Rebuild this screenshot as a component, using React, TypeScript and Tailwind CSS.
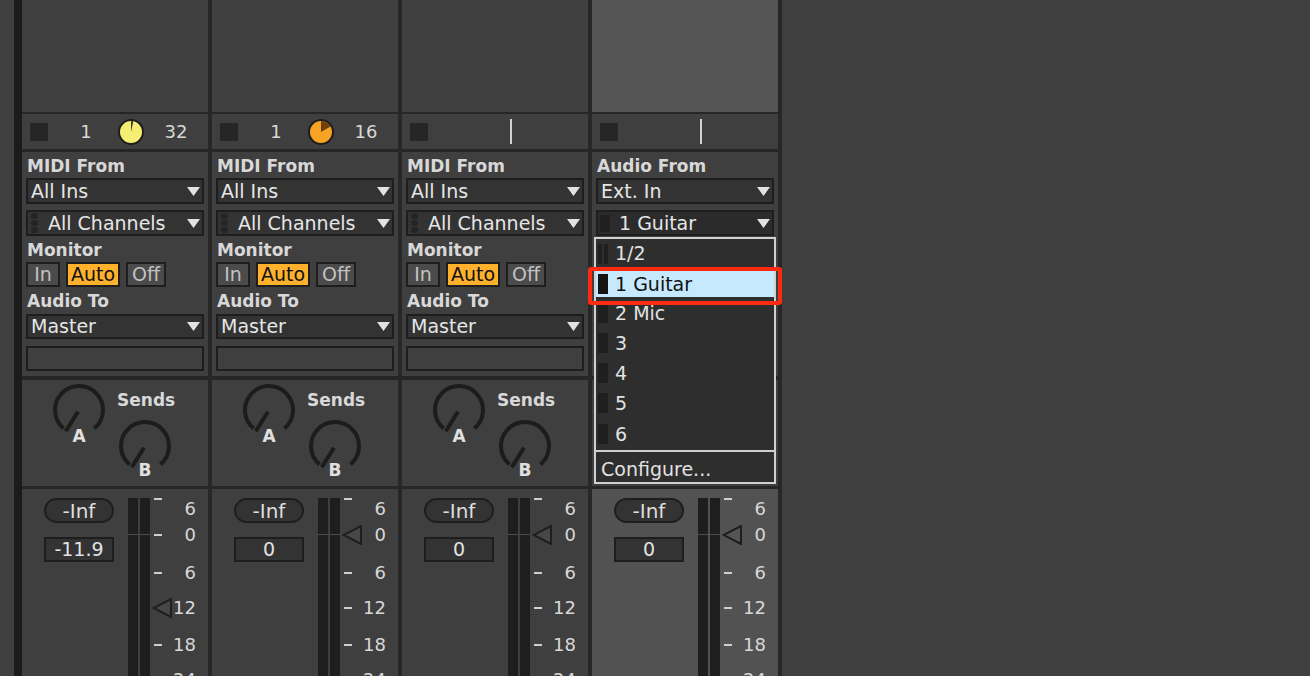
import React from 'react';

type Channel = {
  clip: 'yellow' | 'orange' | 'line';
  from: string;
  volume: string;
  fader: number;
  selected?: boolean;
};

const CHANNELS: Channel[] = [
  { clip: 'yellow', from: 'MIDI', volume: '-11.9', fader: 119 },
  { clip: 'orange', from: 'MIDI', volume: '0', fader: 46 },
  { clip: 'line', from: 'MIDI', volume: '0', fader: 46 },
  { clip: 'line', from: 'Audio', volume: '0', fader: 46, selected: true },
];

const SCALE = [
  { tick: 10, label: '6', y: 20 },
  { tick: 46, label: '0', y: 46 },
  { tick: 84, label: '6', y: 84 },
  { tick: 119, label: '12', y: 119 },
  { tick: 156, label: '18', y: 156 },
  { tick: 191, label: '24', y: 191 },
];

const INPUTS = [
  { label: '1/2', h: 'h-[29px]', stereo: true },
  { label: '1 Guitar', h: 'h-[30px]', active: true },
  { label: '2 Mic', h: 'h-[30px]' },
  { label: '3', h: 'h-[30px]' },
  { label: '4', h: 'h-[30px]' },
  { label: '5', h: 'h-[30px]' },
  { label: '6', h: 'h-[32px]' },
];

const Caret = () => (
  <svg width="13" height="9" viewBox="0 0 13 9" className="shrink-0">
    <path d="M0 0H13L6.5 9Z" fill="#e2e2e2" />
  </svg>
);

const Dots = () => (
  <div className="ml-[3px] flex w-[7px] shrink-0 flex-col gap-[1px]">
    <div className="h-[6px] rounded-full bg-[#242424]" />
    <div className="h-[6px] rounded-full bg-[#242424]" />
    <div className="h-[6px] rounded-full bg-[#242424]" />
  </div>
);

const Dropdown: React.FC<{ label: string; lead?: 'dots' | 'bar'; h?: string; dark?: boolean }> = ({ label, lead, h = 'h-[26px]', dark }) => (
  <div className={`flex ${h} items-center border-2 border-[#1e1e1e] pr-[2px] ${dark ? 'bg-[#2b2b2b]' : 'bg-[#333333]'} ${lead ? '' : 'pl-[3px]'}`}>
    {lead === 'dots' && <Dots />}
    {lead === 'bar' && <div className="ml-[2px] h-[17px] w-[10px] shrink-0 bg-[#202020]" />}
    <span className={`flex-1 text-[19px] leading-none text-[#e6e6e6] ${lead === 'dots' ? 'ml-[10px]' : lead === 'bar' ? 'ml-[9px]' : ''}`}>{label}</span>
    <Caret />
  </div>
);

const Label: React.FC<{ text: string; h?: string }> = ({ text, h = 'h-[26px]' }) => (
  <div className={`flex ${h} items-center pl-[1px] pt-[2px] text-[17px] font-bold leading-none text-[#d8d8d8]`}>{text}</div>
);

const MonitorButton: React.FC<{ text: string; w: string; on?: boolean }> = ({ text, w, on }) => (
  <div className={`flex h-full ${w} items-center justify-center border-2 border-[#1e1e1e] text-[19px] leading-none ${on ? 'bg-[#ffb12c] text-[#111111]' : 'bg-[#4b4b4b] text-[#c2c2c2]'}`}>
    {text}
  </div>
);

const ClipKnob: React.FC<{ kind: 'yellow' | 'orange' }> = ({ kind }) => {
  const yellow = kind === 'yellow';
  const deg = yellow ? 12 : 60;
  const a = (deg * Math.PI) / 180;
  const x = 13 + 11 * Math.sin(a);
  const y = 13 - 11 * Math.cos(a);
  return (
    <svg width="26" height="26" viewBox="0 0 26 26">
      <circle cx="13" cy="13" r="12" fill={yellow ? '#f4ee72' : '#f7a424'} stroke="#1e1e1e" strokeWidth="2" />
      <path d={`M13 13L13 2A11 11 0 0 1 ${x} ${y}Z`} fill={yellow ? '#3b3a22' : '#6f400c'} />
    </svg>
  );
};

const SendKnob = () => {
  const r = 24;
  const s = Math.sin((40 * Math.PI) / 180) * r;
  const c = Math.cos((40 * Math.PI) / 180) * r;
  const p = (32 * Math.PI) / 180;
  return (
    <svg width="56" height="56" viewBox="0 0 56 56" className="shrink-0">
      <path d={`M${28 - s} ${28 + c}A${r} ${r} 0 1 1 ${28 + s} ${28 + c}`} fill="none" stroke="#1c1c1c" strokeWidth="4" />
      <line x1={28 - 2 * Math.sin(p)} y1={28 + 2 * Math.cos(p)} x2={28 - 25 * Math.sin(p)} y2={28 + 25 * Math.cos(p)} stroke="#1c1c1c" strokeWidth="4" />
    </svg>
  );
};

const InputMenu = () => (
  <>
    <div className="absolute left-[2px] top-[237px] z-10 flex h-[247px] w-[182px] flex-col border-2 border-[#d0d0d0] bg-[#2e2e2e]">
      {INPUTS.map((item) => (
        <div key={item.label} className={`${item.h} flex items-center`}>
          <div className={`flex h-[26px] flex-1 items-center ${item.active ? 'mt-[2px] bg-[#c6e9fd]' : ''}`}>
            {item.stereo ? (
              <div className="ml-[2px] flex h-[20px] w-[10px] gap-[2px]">
                <div className="w-[4px] bg-[#1f1f1f]" />
                <div className="w-[4px] bg-[#1f1f1f]" />
              </div>
            ) : (
              <div className={`ml-[2px] h-[20px] w-[10px] ${item.active ? 'bg-[#141414]' : 'bg-[#1f1f1f]'}`} />
            )}
            <span className={`ml-[7px] text-[19px] leading-none ${item.active ? 'text-[#111111]' : 'text-[#e2e2e2]'}`}>{item.label}</span>
          </div>
        </div>
      ))}
      <div className="h-[2px] bg-[#d0d0d0]" />
      <div className="flex h-[30px] items-center pl-[5px] pt-[4px] text-[19px] leading-none text-[#e2e2e2]">Configure...</div>
    </div>
    <div className="absolute left-[-4px] top-[267px] z-20 h-[38px] w-[194px] rounded-[3px] border-4 border-[#ff2a12]" />
  </>
);

const ChannelStrip: React.FC<{ ch: Channel }> = ({ ch }) => {
  const mixBg = ch.selected ? 'bg-[#525252]' : '';
  return (
    <div className="relative flex w-[186px] shrink-0 flex-col">
      <div className={`h-[112px] ${ch.selected ? 'bg-[#555555]' : ''}`} />
      <div className="h-[2px] bg-[#262626]" />

      <div className="flex h-[35px] items-center pl-[8px]">
        <div className="h-[18px] w-[18px] bg-[#262626]" />
        {ch.clip === 'line' ? (
          <div className="ml-[82px] h-[25px] w-[2px] bg-[#d2d2d2]" />
        ) : (
          <>
            <div className="ml-[14px] w-[48px] text-center text-[18px] leading-none text-[#d8d8d8]">1</div>
            <div className="ml-[8px] flex h-[26px] w-[26px]">
              <ClipKnob kind={ch.clip} />
            </div>
            <div className="ml-[8px] w-[48px] text-center text-[18px] leading-none text-[#d8d8d8]">{ch.clip === 'yellow' ? '32' : '16'}</div>
          </>
        )}
      </div>
      <div className="h-[3px] bg-[#262626]" />

      <div className="flex h-[224px] flex-col px-[4px]">
        {ch.from === 'MIDI' ? (
          <>
            <Label text="MIDI From" />
            <Dropdown label="All Ins" />
            <div className="mt-[6px]">
              <Dropdown label="All Channels" lead="dots" />
            </div>
            <Label text="Monitor" />
            <div className="flex h-[25px] gap-[6px]">
              <MonitorButton text="In" w="w-[34px]" />
              <MonitorButton text="Auto" w="w-[54px]" on />
              <MonitorButton text="Off" w="w-[40px]" />
            </div>
            <Label text="Audio To" h="h-[27px]" />
            <Dropdown label="Master" h="h-[25px]" />
            <div className="mt-[7px] h-[25px] border-2 border-[#1e1e1e]" />
          </>
        ) : (
          <>
            <Label text="Audio From" />
            <Dropdown label="Ext. In" />
            <div className="mt-[6px]">
              <Dropdown label="1 Guitar" lead="bar" dark />
            </div>
          </>
        )}
      </div>
      <div className="h-[4px] bg-[#262626]" />

      <div className="flex h-[106px] pl-[29px] pt-[2px]">
        {!ch.selected && (
          <>
            <div className="flex w-[56px] flex-col items-center">
              <SendKnob />
              <span className="-mt-[10px] text-[17px] font-bold leading-[17px] text-[#e0e0e0]">A</span>
            </div>
            <div className="ml-[10px] flex flex-col">
              <span className="mt-[8px] h-[20px] text-[17px] font-bold leading-[20px] text-[#d8d8d8]">Sends</span>
              <div className="mt-[8px] flex w-[56px] flex-col items-center">
                <SendKnob />
                <span className="-mt-[12px] text-[17px] font-bold leading-[17px] text-[#e0e0e0]">B</span>
              </div>
            </div>
          </>
        )}
      </div>
      <div className="h-[3px] bg-[#262626]" />

      <div className={`flex flex-1 ${mixBg}`}>
        <div className="flex w-[92px] shrink-0 flex-col pl-[22px] pt-[9px]">
          <div className="flex h-[25px] w-[70px] items-center justify-center rounded-full border-2 border-[#1e1e1e] bg-[#333333] text-[20px] leading-none text-[#dedede]">-Inf</div>
          <div className="mt-[14px] flex h-[25px] w-[70px] items-center justify-center border-2 border-[#1e1e1e] bg-[#333333] text-[19px] leading-none text-[#e2e2e2]">{ch.volume}</div>
        </div>
        <div className="ml-[14px] flex gap-[2px] pt-[9px]">
          <div className="relative w-[10px] bg-[#1e1e1e]">
            <div className="absolute left-0 top-[36px] h-px w-full bg-[#4c4c4c]" />
          </div>
          <div className="relative w-[10px] bg-[#1e1e1e]">
            <div className="absolute left-0 top-[36px] h-px w-full bg-[#4c4c4c]" />
          </div>
        </div>
        <div className="relative flex-1">
          {SCALE.map((m, i) => (
            <React.Fragment key={i}>
              <div className="absolute left-[4px] h-[2px] w-[8px] bg-[#cfcfcf]" style={{ top: m.tick - 1 }} />
              <div className="absolute right-[12px] h-[20px] text-[18px] leading-[20px] text-[#d8d8d8]" style={{ top: m.y - 10 }}>
                {m.label}
              </div>
            </React.Fragment>
          ))}
          <svg width="20" height="20" viewBox="0 0 20 20" className="absolute left-[2px]" style={{ top: ch.fader - 10 }}>
            <path d="M19 1L19 19L1.5 10Z" fill={ch.selected ? '#555555' : '#474747'} stroke="#1e1e1e" strokeWidth="2" strokeLinejoin="miter" />
          </svg>
        </div>
      </div>

      {ch.selected && <InputMenu />}
    </div>
  );
};

export default function App() {
  return (
    <div className="flex h-[676px] w-[1310px] overflow-hidden bg-[#3f3f3f] font-['DejaVu_Sans',sans-serif]">
      <div className="w-[14px] shrink-0" />
      <div className="w-[8px] shrink-0 bg-[#1b1b1b]" />
      {CHANNELS.map((ch, i) => (
        <React.Fragment key={i}>
          <ChannelStrip ch={ch} />
          <div className="w-[4px] shrink-0 bg-[#272727]" />
        </React.Fragment>
      ))}
      <div className="flex-1" />
    </div>
  );
}
